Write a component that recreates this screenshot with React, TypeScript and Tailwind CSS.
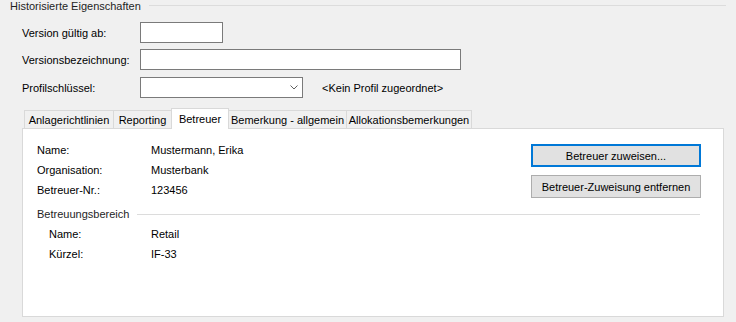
import React from "react"

const tabs = [
  { label: "Anlagerichtlinien", w: "w-[89px]", cls: "border-l border-t" },
  { label: "Reporting", w: "w-[58px]", cls: "border-l border-t" },
  { label: "Betreuer", w: "w-[58px]", cls: "border-l border-t border-r", active: true },
  { label: "Bemerkung - allgemein", w: "w-[117px]", cls: "border-t" },
  { label: "Allokationsbemerkungen", w: "w-[126px]", cls: "border-l border-t border-r" },
]

const Row = ({ label, value, labelW }: { label: string; value: string; labelW: string }) => (
  <div className="flex h-[20px] items-center">
    <div className={labelW}>{label}</div>
    <div>{value}</div>
  </div>
)

const App = () => {
  return (
    <div
      className="w-[736px] h-[322px] overflow-hidden bg-[#f0f0f0] text-[11px] leading-[14px] text-black"
      style={{ fontFamily: '"Liberation Sans", Arial, sans-serif' }}
    >
      {/* Gruppe: Historisierte Eigenschaften */}
      <div className="flex h-[11px] items-center pl-[10px] pr-[10px]">
        <span className="text-[#1e1e1e]">Historisierte Eigenschaften</span>
        <div className="ml-[8px] h-px flex-1 bg-[#dcdcdc]" />
      </div>

      <div className="mt-[11px] pl-[22px]">
        <div className="flex h-[21px] items-center">
          <div className="w-[118px]">Version gültig ab:</div>
          <div className="h-[21px] w-[83px] border border-[#7a7a7a] bg-white" />
        </div>
        <div className="mt-[6px] flex h-[21px] items-center">
          <div className="w-[118px]">Versionsbezeichnung:</div>
          <div className="h-[21px] w-[321px] border border-[#7a7a7a] bg-white" />
        </div>
        <div className="mt-[7px] flex h-[21px] items-center">
          <div className="w-[118px]">Profilschlüssel:</div>
          <div className="flex h-[21px] w-[163px] items-center justify-end border border-[#7a7a7a] bg-white pr-[4px]">
            <svg width="8" height="5" viewBox="0 0 8 5" fill="none">
              <path d="M0.5 0.5 L4 4 L7.5 0.5" stroke="#606060" strokeWidth="1" />
            </svg>
          </div>
          <div className="ml-[19px]">&lt;Kein Profil zugeordnet&gt;</div>
        </div>
      </div>

      {/* Tabs */}
      <div className="mt-[10px] flex h-[21px] items-end pl-[24px]">
        {tabs.map(t =>
          t.active ? (
            <div
              key={t.label}
              className={`${t.w} ${t.cls} relative z-10 flex h-[21px] items-start justify-center border-[#d9d9d9] bg-white pt-[3px]`}
            >
              {t.label}
            </div>
          ) : (
            <div
              key={t.label}
              className={`${t.w} ${t.cls} mb-px flex h-[18px] items-center justify-center border-[#d9d9d9] bg-[#f0f0f0] pt-[1px]`}
            >
              {t.label}
            </div>
          )
        )}
      </div>

      <div className="ml-[22px] -mt-px h-[189px] w-[702px] border border-[#d9d9d9] bg-white pl-[14px] pr-[22px] pt-[11px]">
        <div className="flex">
          <div className="flex-1">
            <Row label="Name:" value="Mustermann, Erika" labelW="w-[114px]" />
            <Row label="Organisation:" value="Musterbank" labelW="w-[114px]" />
            <Row label="Betreuer-Nr.:" value="123456" labelW="w-[114px]" />
          </div>
          <div className="flex w-[170px] flex-col gap-[8px] pt-[4px]">
            <button className="h-[23px] w-[170px] border-2 border-[#0078d7] bg-[#e1e1e1] text-[11px]">
              Betreuer zuweisen...
            </button>
            <button className="h-[23px] w-[170px] border border-[#adadad] bg-[#e1e1e1] text-[11px]">
              Betreuer-Zuweisung entfernen
            </button>
          </div>
        </div>

        <div className="mt-[4px] flex h-[20px] items-center">
          <span className="text-[#1e1e1e]">Betreuungsbereich</span>
          <div className="ml-[8px] mr-px h-px flex-1 bg-[#dcdcdc]" />
        </div>
        <div className="pl-[12px]">
          <Row label="Name:" value="Retail" labelW="w-[102px]" />
          <Row label="Kürzel:" value="IF-33" labelW="w-[102px]" />
        </div>
      </div>
    </div>
  )
}

export default App
